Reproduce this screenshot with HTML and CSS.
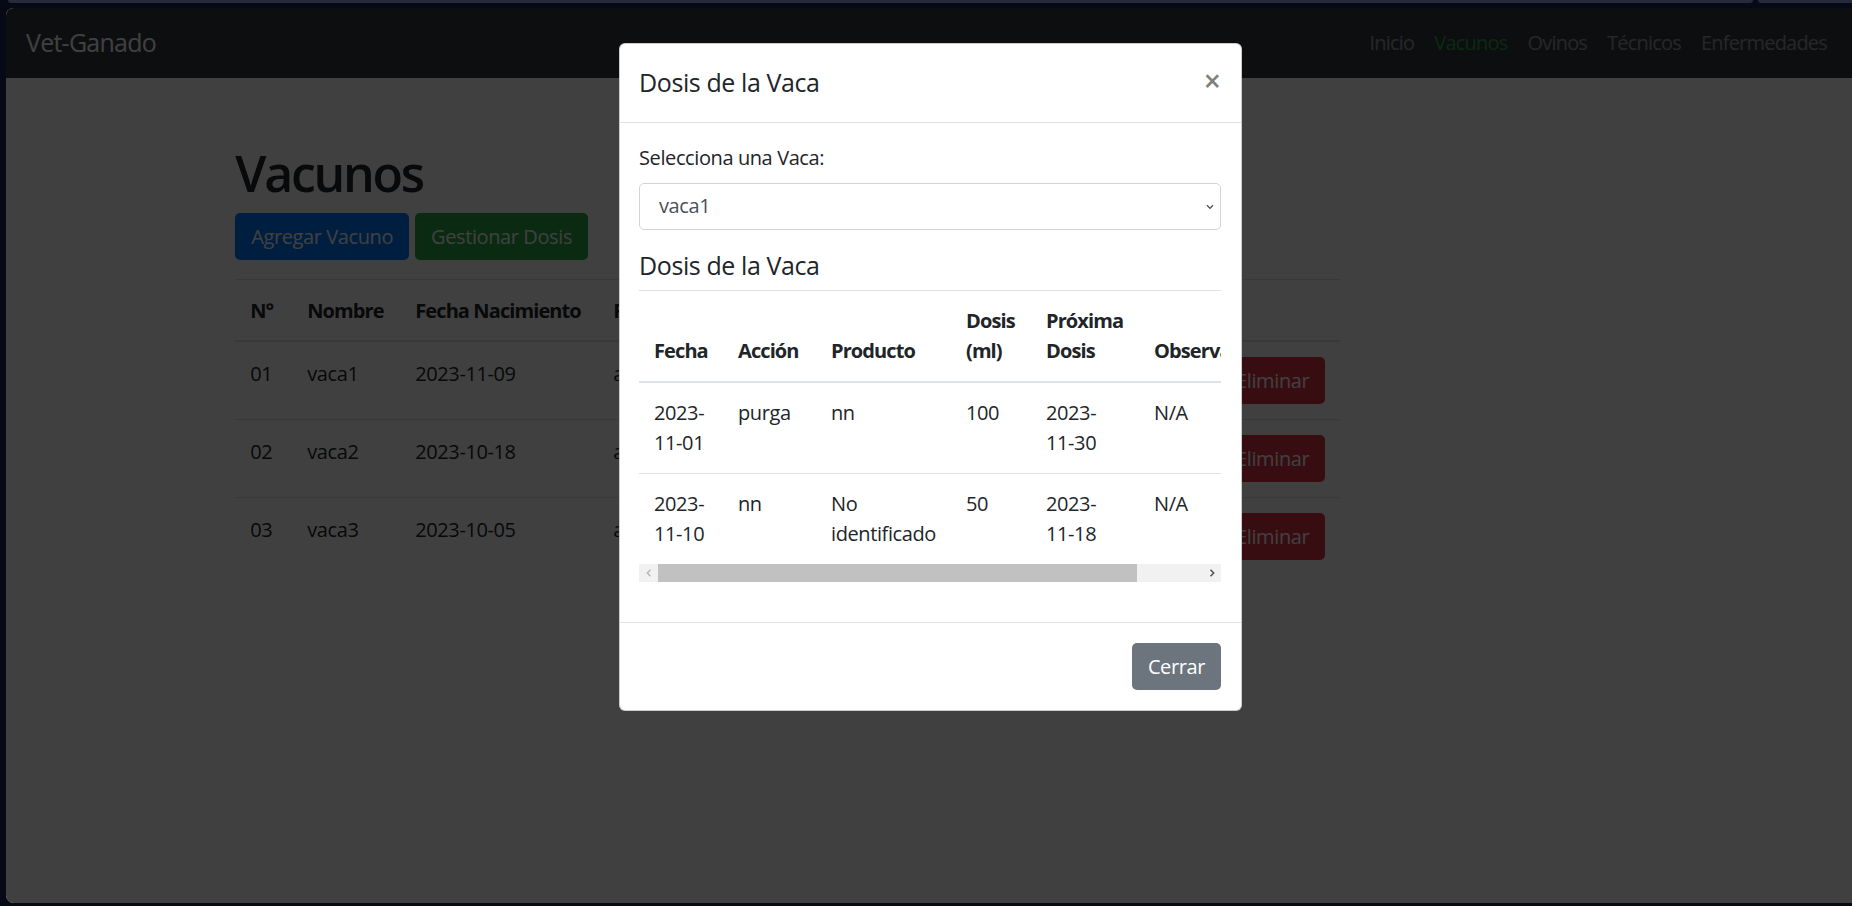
FILE: index.html
```html
<!DOCTYPE html>
<html lang="es">
<head>
<meta charset="utf-8">
<title>Vet-Ganado</title>
<link rel="stylesheet" href="styles.css">
</head>
<body>
<div class="chrome-top">
  <div class="tab tab-main"></div>
  <div class="tab tab-side"></div>
</div>
<div class="window">
  <nav class="navbar">
    <a class="brand">Vet-Ganado</a>
    <ul class="nav">
      <li><a class="nav-link">Inicio</a></li>
      <li><a class="nav-link active">Vacunos</a></li>
      <li><a class="nav-link">Ovinos</a></li>
      <li><a class="nav-link">Técnicos</a></li>
      <li><a class="nav-link">Enfermedades</a></li>
    </ul>
  </nav>

  <main class="container">
    <h1 class="page-title">Vacunos</h1>
    <div class="actions">
      <button class="btn btn-primary">Agregar Vacuno</button>
      <button class="btn btn-success">Gestionar Dosis</button>
    </div>
    <table class="table page-table">
      <colgroup>
        <col class="pc-n"><col class="pc-name"><col class="pc-birth"><col class="pc-farm"><col class="pc-breed"><col class="pc-act">
      </colgroup>
      <thead>
        <tr><th>N°</th><th>Nombre</th><th>Fecha Nacimiento</th><th>Finca</th><th>Raza</th><th>Acciones</th></tr>
      </thead>
      <tbody>
        <tr><td>01</td><td>vaca1</td><td>2023-11-09</td><td>aurora</td><td>Holstein</td><td class="cell-actions"><button class="btn btn-warning">Editar</button><button class="btn btn-danger">Eliminar</button></td></tr>
        <tr><td>02</td><td>vaca2</td><td>2023-10-18</td><td>aurora</td><td>Jersey</td><td class="cell-actions"><button class="btn btn-warning">Editar</button><button class="btn btn-danger">Eliminar</button></td></tr>
        <tr><td>03</td><td>vaca3</td><td>2023-10-05</td><td>aurora</td><td>Brahman</td><td class="cell-actions"><button class="btn btn-warning">Editar</button><button class="btn btn-danger">Eliminar</button></td></tr>
      </tbody>
    </table>
  </main>

  <div class="backdrop"></div>

  <div class="modal-layer">
    <div class="modal">
      <div class="modal-header">
        <h5 class="modal-title">Dosis de la Vaca</h5>
        <button class="close" aria-label="Cerrar">×</button>
      </div>
      <div class="modal-body">
        <div class="form-group">
          <label class="form-label" for="vaca">Selecciona una Vaca:</label>
          <div class="select-wrap">
            <select id="vaca" class="form-control">
              <option>vaca1</option>
              <option>vaca2</option>
              <option>vaca3</option>
            </select>
            <svg class="select-caret" width="8" height="6" viewBox="0 0 8 6"><path d="M1 1.2 L4 4.4 L7 1.2" fill="none" stroke="#4a4a4a" stroke-width="1.3"/></svg>
          </div>
        </div>
        <h5 class="section-title">Dosis de la Vaca</h5>
        <div class="table-scroll">
          <table class="table dose-table">
            <colgroup>
              <col class="dc-date"><col class="dc-action"><col class="dc-product"><col class="dc-dose"><col class="dc-next"><col class="dc-obs">
            </colgroup>
            <thead>
              <tr><th>Fecha</th><th>Acción</th><th>Producto</th><th>Dosis (ml)</th><th>Próxima Dosis</th><th>Observaciones</th></tr>
            </thead>
            <tbody>
              <tr><td>2023-<wbr><span class="nw">11-01</span></td><td>purga</td><td>nn</td><td>100</td><td>2023-<wbr><span class="nw">11-30</span></td><td>N/A</td></tr>
              <tr><td>2023-<wbr><span class="nw">11-10</span></td><td>nn</td><td>No identificado</td><td>50</td><td>2023-<wbr><span class="nw">11-18</span></td><td>N/A</td></tr>
            </tbody>
          </table>
        </div>
        <div class="hscroll">
          <div class="hs-arrow">
            <svg width="6" height="8" viewBox="0 0 6 8"><path d="M4.5 0.8 L1.3 4 L4.5 7.2" fill="none" stroke="#b5b5b5" stroke-width="1.4"/></svg>
          </div>
          <div class="hs-track"><div class="hs-thumb"></div></div>
          <div class="hs-arrow">
            <svg width="6" height="8" viewBox="0 0 6 8"><path d="M1.5 0.8 L4.7 4 L1.5 7.2" fill="none" stroke="#505050" stroke-width="1.5"/></svg>
          </div>
        </div>
      </div>
      <div class="modal-footer">
        <button class="btn btn-secondary">Cerrar</button>
      </div>
    </div>
  </div>
</div>
</body>
</html>
```

FILE: styles.css
```css
* { box-sizing: border-box; }

html, body {
  margin: 0;
  height: 100%;
}

body {
  background: #060a17;
  overflow: hidden;
  font-family: "Open Sans", "Noto Sans", "DejaVu Sans", sans-serif;
  letter-spacing: -0.025em;
}

/* window chrome */
.chrome-top {
  height: 8px;
  display: flex;
  gap: 5px;
  padding-left: 8px;
}
.tab {
  height: 3px;
  background: #252b3b;
  border-radius: 0 0 7px 7px;
}
.tab-main { flex: 1; }
.tab-side { width: 94px; border-radius: 0 0 0 7px; }

.window {
  position: relative;
  margin-left: 6px;
  height: 895px;
  background: #fff;
  border-radius: 8px 0 0 8px;
  overflow: hidden;
  color: #212529;
  font-size: 20px;
  line-height: 1.5;
}

/* navbar */
.navbar {
  height: 70px;
  background: #343a40;
  display: flex;
  align-items: center;
  justify-content: space-between;
  padding: 0 15px 0 20px;
}
.brand {
  font-size: 25px;
  line-height: 1.5;
  color: #fff;
  letter-spacing: -0.03em;
}
.nav {
  display: flex;
  list-style: none;
  margin: 0;
  padding: 0;
}
.nav-link {
  display: block;
  padding: 10px;
  color: rgba(255, 255, 255, 0.5);
  letter-spacing: -0.04em;
}
.nav-link.active { color: #28a745; }

/* page */
.container {
  width: 1425px;
  margin: 0 auto;
  padding: 65px 18.75px 0;
}
.page-title {
  font-size: 50px;
  font-weight: 600;
  line-height: 1.2;
  margin: 0 0 10px;
  letter-spacing: -0.045em;
}
.actions {
  display: flex;
  gap: 6px;
  margin-bottom: 19px;
}

.btn {
  font-family: inherit;
  font-size: 20px;
  line-height: 30px;
  letter-spacing: inherit;
  padding: 7.5px 15px;
  border: 1.25px solid transparent;
  border-radius: 5px;
  color: #fff;
  background: none;
}
.btn-primary { background: #007bff; }
.btn-success { background: #28a745; }
.btn-danger { background: #dc3545; }
.btn-warning { background: #ffc107; color: #212529; }
.btn-secondary { background: #6c757d; }

.table {
  border-collapse: collapse;
  table-layout: fixed;
}
.table th,
.table td {
  padding: 15px;
  text-align: left;
  border-top: 1px solid #dee2e6;
}
.table thead th {
  vertical-align: bottom;
  border-bottom: 2px solid #dee2e6;
  font-weight: 700;
  letter-spacing: -0.045em;
}
.table td { vertical-align: top; }

.page-table { width: 1105px; }
.page-table th { white-space: nowrap; padding-top: 16px; padding-bottom: 14px; }
.page-table td { padding-top: 17px; padding-bottom: 13px; }
.pc-n { width: 57px; }
.pc-name { width: 108px; }
.pc-birth { width: 198px; }
.pc-farm { width: 260px; }
.pc-breed { width: 222px; }
.pc-act { width: 260px; }
.table .cell-actions {
  text-align: right;
  white-space: nowrap;
  padding-top: 15px;
  padding-bottom: 15px;
}
.cell-actions .btn + .btn { margin-left: 5px; }

/* modal */
.backdrop {
  position: absolute;
  inset: 0;
  background: rgba(0, 0, 0, 0.75);
}
.modal-layer {
  position: absolute;
  inset: 0;
  display: flex;
  justify-content: center;
  align-items: flex-start;
  padding: 35px 0 0 3px;
}
.modal {
  width: 623px;
  background: #fff;
  border: 1px solid rgba(0, 0, 0, 0.2);
  border-radius: 6px;
}
.modal-header {
  display: flex;
  align-items: flex-start;
  padding: 20px 20px 20px 19px;
  border-bottom: 1px solid #dee2e6;
}
.modal-title {
  margin: 0;
  font-size: 25px;
  font-weight: 500;
  line-height: 1.5;
}
.close {
  margin: -18px -20px -20px auto;
  padding: 20px;
  background: none;
  border: 0;
  font-family: inherit;
  font-size: 30px;
  font-weight: 600;
  line-height: 1;
  color: #000;
  opacity: 0.5;
  text-shadow: 0 1px 0 #fff;
  letter-spacing: 0;
}
.modal-body { padding: 20px 20px 20px 19px; }
.form-group { margin-bottom: 20px; }
.form-label {
  display: block;
  margin-bottom: 10px;
}
.select-wrap { position: relative; }
.form-control {
  display: block;
  width: 100%;
  height: 47.5px;
  padding: 7.5px 30px 7.5px 19px;
  font-family: inherit;
  font-size: 20px;
  line-height: 30px;
  letter-spacing: inherit;
  color: #495057;
  background: #fff;
  border: 1.25px solid #ced4da;
  border-radius: 5px;
  appearance: none;
  -webkit-appearance: none;
}
.select-caret {
  position: absolute;
  right: 7px;
  top: 21px;
}
.section-title {
  margin: 0 0 10px;
  font-size: 25px;
  font-weight: 500;
  line-height: 1.2;
}
.table-scroll { overflow: hidden; }
.dose-table { width: 665px; }
.dc-date { width: 84px; }
.dc-action { width: 93px; }
.dc-product { width: 135px; }
.dc-dose { width: 80px; }
.dc-next { width: 108px; }
.dc-obs { width: 165px; }
.nw { white-space: nowrap; }

.hscroll {
  display: flex;
  height: 18px;
  background: #f1f1f1;
  margin-bottom: 20px;
}
.hs-arrow {
  width: 19px;
  display: flex;
  align-items: center;
  justify-content: center;
}
.hs-track { flex: 1; }
.hs-thumb {
  width: 479px;
  height: 100%;
  background: #c1c1c1;
}

.modal-footer {
  display: flex;
  justify-content: flex-end;
  padding: 15px;
  border-top: 1px solid #dee2e6;
}
.modal-footer .btn { margin: 5px; }
```
